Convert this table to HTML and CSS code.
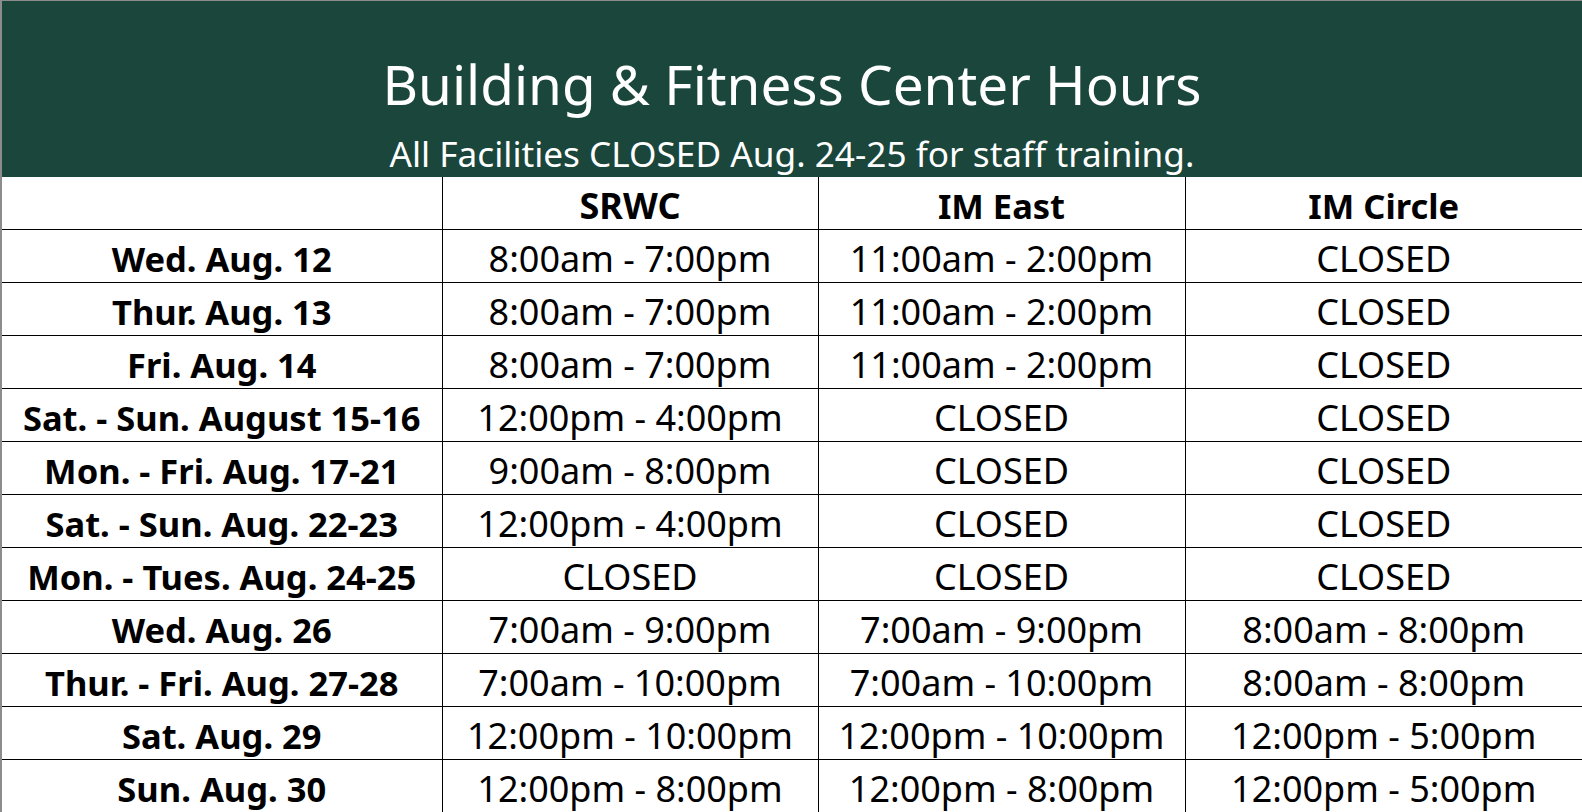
FILE: index.html
```html
<!DOCTYPE html>
<html lang="en">
<head>
<meta charset="utf-8">
<title>Building &amp; Fitness Center Hours</title>
<link rel="stylesheet" href="styles.css">
</head>
<body>
<div class="sheet">
  <div class="banner">
    <div class="title">Building &amp; Fitness Center Hours</div>
    <div class="subtitle">All Facilities CLOSED Aug. 24-25 for staff training.</div>
  </div>
  <table class="hours">
    <colgroup>
      <col class="c1"><col class="c2"><col class="c3"><col class="c4">
    </colgroup>
    <thead>
      <tr><th></th><th class="srwc">SRWC</th><th>IM East</th><th>IM Circle</th></tr>
    </thead>
    <tbody>
      <tr><th>Wed. Aug. 12</th><td>8:00am - 7:00pm</td><td>11:00am - 2:00pm</td><td>CLOSED</td></tr>
      <tr><th>Thur. Aug. 13</th><td>8:00am - 7:00pm</td><td>11:00am - 2:00pm</td><td>CLOSED</td></tr>
      <tr><th>Fri. Aug. 14</th><td>8:00am - 7:00pm</td><td>11:00am - 2:00pm</td><td>CLOSED</td></tr>
      <tr><th>Sat. - Sun. August 15-16</th><td>12:00pm - 4:00pm</td><td>CLOSED</td><td>CLOSED</td></tr>
      <tr><th>Mon. - Fri. Aug. 17-21</th><td>9:00am - 8:00pm</td><td>CLOSED</td><td>CLOSED</td></tr>
      <tr><th>Sat. - Sun. Aug. 22-23</th><td>12:00pm - 4:00pm</td><td>CLOSED</td><td>CLOSED</td></tr>
      <tr><th>Mon. - Tues. Aug. 24-25</th><td>CLOSED</td><td>CLOSED</td><td>CLOSED</td></tr>
      <tr><th>Wed. Aug. 26</th><td>7:00am - 9:00pm</td><td>7:00am - 9:00pm</td><td>8:00am - 8:00pm</td></tr>
      <tr><th>Thur. - Fri. Aug. 27-28</th><td>7:00am - 10:00pm</td><td>7:00am - 10:00pm</td><td>8:00am - 8:00pm</td></tr>
      <tr><th>Sat. Aug. 29</th><td>12:00pm - 10:00pm</td><td>12:00pm - 10:00pm</td><td>12:00pm - 5:00pm</td></tr>
      <tr><th>Sun. Aug. 30</th><td>12:00pm - 8:00pm</td><td>12:00pm - 8:00pm</td><td>12:00pm - 5:00pm</td></tr>
    </tbody>
  </table>
</div>
</body>
</html>
```

FILE: styles.css
```css
html, body {
  margin: 0;
  padding: 0;
  background: #ffffff;
}

body {
  font-family: "Noto Sans", "Open Sans", sans-serif;
  color: #000000;
  overflow: hidden;
}

.sheet {
  width: 1580px;
  border-left: 2px solid #8c8c8c;
  border-top: 1px solid #8c8c8c;
}

.banner {
  background: #1a463c;
  color: #ffffff;
  height: 176px;
  box-sizing: border-box;
  padding-top: 48px;
  display: flex;
  flex-direction: column;
  align-items: center;
  text-align: center;
}

.title {
  font-size: 54.8px;
  line-height: 70px;
  font-weight: 400;
}

.subtitle {
  margin-top: 12px;
  font-size: 35.2px;
  line-height: 44px;
}

.hours {
  border-collapse: collapse;
  table-layout: fixed;
  width: 1580px;
}

.c1 { width: 440px; }
.c2 { width: 376px; }
.c3 { width: 367px; }
.c4 { width: 397px; }

.hours th,
.hours td {
  height: 52px;
  box-sizing: border-box;
  padding: 6px 0 0;
  border: 1px solid #000000;
  text-align: center;
  vertical-align: top;
  font-size: 36px;
  line-height: 46px;
  white-space: nowrap;
  overflow: hidden;
}

.hours tr > :first-child {
  border-left: none;
}

.hours tr > :last-child {
  border-right: none;
}

.hours thead th {
  border-top: none;
}

.hours th {
  font-weight: 700;
  font-size: 34.5px;
}

.hours th.srwc {
  font-size: 36px;
}

.hours td {
  font-weight: 400;
}
```
